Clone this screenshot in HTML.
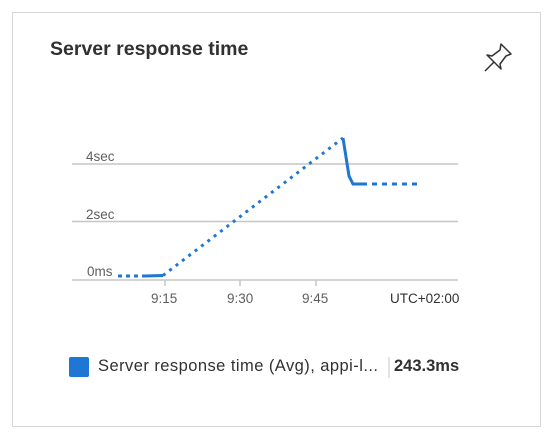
<html><head><style>
body{margin:0;background:#fff;font-family:"Segoe UI","Liberation Sans",sans-serif;}
.card{position:absolute;left:12px;top:12px;width:529px;height:415px;border:1px solid #d6d6d6;box-sizing:border-box;}
.t{position:absolute;left:50px;top:38px;font-size:19.5px;font-weight:600;color:#323130;}
.lbl{position:absolute;font-size:13.5px;color:#605e5c;}
.leg{position:absolute;left:98px;top:357px;font-size:16.5px;color:#323130;white-space:nowrap;}
</style></head><body>
<div class="card"></div>
<div class="t">Server response time</div>
<svg style="position:absolute;left:0;top:0" width="555" height="441">
<g stroke="#c8c6c4" stroke-width="1.5">
<line x1="72" y1="164" x2="458" y2="164"/><line x1="72" y1="221.5" x2="458" y2="221.5"/><line x1="72" y1="280" x2="458" y2="280"/>
<line x1="165" y1="280" x2="165" y2="286"/><line x1="240" y1="280" x2="240" y2="286"/><line x1="316" y1="280" x2="316" y2="286"/>
</g>
<g fill="none" stroke="#1f77d4" stroke-width="3">
<path d="M118 276 L145 276" stroke-dasharray="4 4"/>
<path d="M145 276 L163 275.5"/>
<path d="M163 275.5 L343 138" stroke-dasharray="3 5"/>
<path d="M343 138 L349 176 L353 184 L362 184"/>
<path d="M362 184 L418 184" stroke-dasharray="5 5"/>
</g>
<g fill="none" stroke="#323130" stroke-width="1.5" stroke-linejoin="round">
<path d="M501 44 L511 54 L506 56 L500 64 L501 69 L487 55 L492 56 L500 50 Z"/>
<path d="M494 62 L485 71"/>
</g>
<line x1="389" y1="357" x2="389" y2="378" stroke="#c8c6c4"/>
</svg>
<div class="lbl" style="left:86px;top:149px">4sec</div>
<div class="lbl" style="left:86px;top:207px">2sec</div>
<div class="lbl" style="left:87px;top:264px">0ms</div>
<div class="lbl" style="left:151px;top:291px">9:15</div>
<div class="lbl" style="left:227px;top:291px">9:30</div>
<div class="lbl" style="left:302px;top:291px">9:45</div>
<div class="lbl" style="left:390px;top:291px;color:#323130">UTC+02:00</div>
<div style="position:absolute;left:69px;top:357px;width:20px;height:20px;background:#1f77d4;border-radius:2px"></div>
<div class="leg" style="letter-spacing:0.45px">Server response time (Avg), appi-l...</div>
<div class="leg" style="left:394px;font-weight:600">243.3ms</div>
</body></html>
